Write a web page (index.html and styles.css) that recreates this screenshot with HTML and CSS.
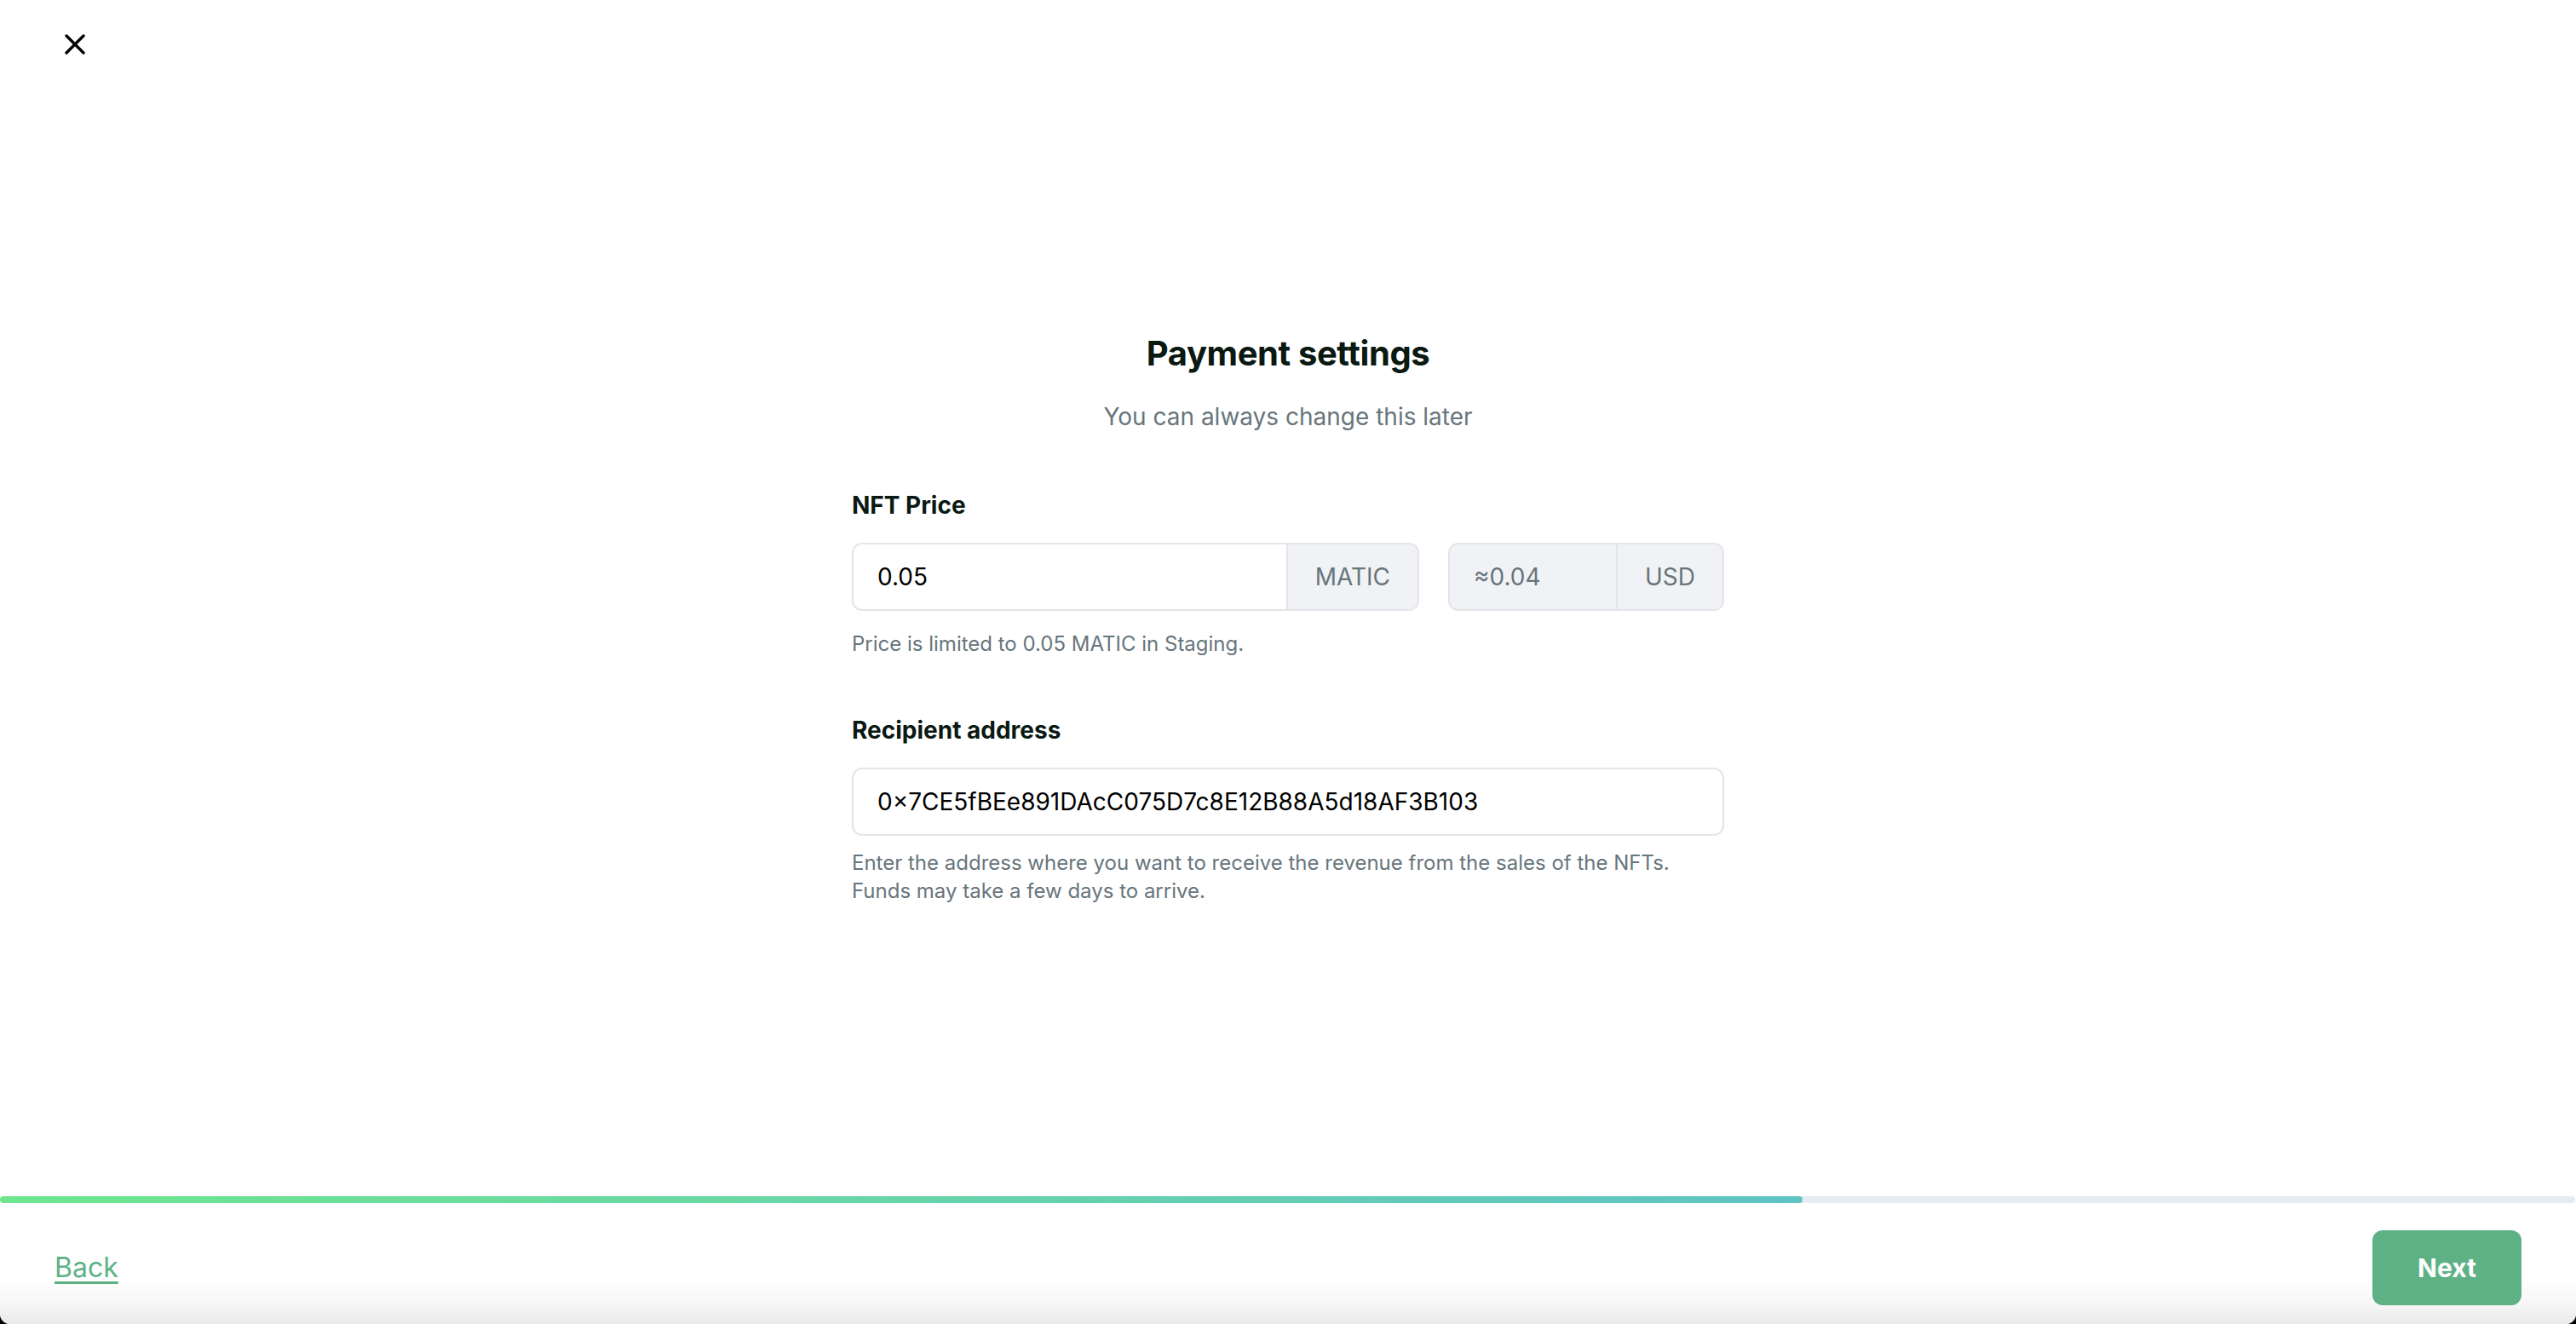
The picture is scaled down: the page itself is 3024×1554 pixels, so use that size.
FILE: index.html
```html
<!DOCTYPE html>
<html lang="en">
<head>
<meta charset="utf-8">
<title>Payment settings</title>
<link rel="stylesheet" href="styles.css">
</head>
<body>
<div class="app">
  <header class="topbar">
    <button class="close" aria-label="Close">
      <svg width="24" height="24" viewBox="0 0 24 24" fill="none" stroke="currentColor" stroke-width="3.4" stroke-linecap="round">
        <path d="M2 2 L22 22 M22 2 L2 22"/>
      </svg>
    </button>
  </header>

  <main class="content">
    <div class="form">
      <div class="intro">
        <h1 class="title">Payment settings</h1>
        <p class="subtitle">You can always change this later</p>
      </div>

      <div class="field">
        <label class="label">NFT Price</label>
        <div class="price-row">
          <div class="input-group price">
            <span class="value">0.05</span>
            <span class="addon">MATIC</span>
          </div>
          <div class="input-group converted">
            <span class="value muted">≈0.04</span>
            <span class="addon">USD</span>
          </div>
        </div>
        <p class="help help-price">Price is limited to 0.05 MATIC in Staging.</p>
      </div>

      <div class="field">
        <label class="label">Recipient address</label>
        <div class="input-group">
          <span class="value">0×7CE5fBEe891DAcC075D7c8E12B88A5d18AF3B103</span>
        </div>
        <p class="help">Enter the address where you want to receive the revenue from the sales of the NFTs.<br>Funds may take a few days to arrive.</p>
      </div>
    </div>
  </main>

  <footer class="footer">
    <div class="progress"><div class="progress-fill" style="width:70%"></div></div>
    <div class="actions">
      <a class="back" href="#">Back</a>
      <button class="next">Next</button>
    </div>
  </footer>
</div>
</body>
</html>
```

FILE: styles.css
```css
* { box-sizing: border-box; }

html, body {
  margin: 0;
  padding: 0;
  background: #000;
}

body {
  font-family: "Inter", "Noto Sans", sans-serif;
  color: #0b1a13;
}

.app {
  width: 3024px;
  height: 1554px;
  background: #fff;
  border-radius: 0 0 12px 12px;
  overflow: hidden;
  display: flex;
  flex-direction: column;
}

.topbar {
  padding: 40px 0 0 76px;
  height: 120px;
}

.close {
  border: 0;
  background: none;
  padding: 0;
  width: 24px;
  height: 24px;
  color: #000;
  display: block;
  cursor: pointer;
}

.close svg { display: block; }

.content {
  display: flex;
  justify-content: center;
  padding-top: 271px;
}

.form {
  width: 1024px;
  display: flex;
  flex-direction: column;
}

.intro {
  text-align: center;
  margin-bottom: 64px;
}

.title {
  margin: 0;
  font-size: 40px;
  line-height: 48px;
  font-weight: 700;
  letter-spacing: -0.4px;
  color: #0a1912;
}

.subtitle {
  margin: 30px 0 0;
  font-size: 28px;
  line-height: 40px;
  color: #67757c;
}

.field {
  display: flex;
  flex-direction: column;
}

.field + .field { margin-top: 65px; }

.label {
  font-size: 28px;
  line-height: 40px;
  font-weight: 700;
  color: #0a1912;
  margin-bottom: 24px;
}

.price-row {
  display: flex;
  gap: 34px;
}

.input-group {
  height: 80px;
  border: 2px solid #e3e5ea;
  border-radius: 12px;
  display: flex;
  align-items: stretch;
  overflow: hidden;
  background: #fff;
}

.input-group.price { width: 666px; }
.input-group.converted { flex: 1; background: #f1f2f5; }

.value {
  flex: 1;
  display: flex;
  align-items: center;
  padding: 0 28px;
  font-size: 28px;
  color: #000;
}

.value.muted { color: #67757c; }

.addon {
  display: flex;
  align-items: center;
  padding: 0 32px;
  border-left: 2px solid #e3e5ea;
  background: #f1f2f5;
  font-size: 28px;
  color: #67757c;
}

.help {
  margin: 15px 0 0;
  font-size: 24px;
  line-height: 33px;
  color: #67757c;
}

.help-price { margin-top: 22px; }

.footer {
  margin-top: auto;
  background: linear-gradient(to bottom, #fff 0%, #fff 62%, #f6f6f6 85%, #e9e9e9 100%);
}

.progress {
  height: 8px;
  background: #e6ecef;
  border-radius: 4px;
  margin-right: 1px;
}

.progress-fill {
  height: 100%;
  border-radius: 4px;
  background: linear-gradient(to right, #6ee68e, #5ec4c4);
}

.actions {
  display: flex;
  justify-content: space-between;
  align-items: center;
  padding: 32px 64px 22px;
}

.back {
  font-size: 32px;
  line-height: 40px;
  color: #5eb185;
  text-decoration: underline;
  text-decoration-thickness: 3px;
  text-underline-offset: 5px;
}

.next {
  width: 175px;
  height: 88px;
  border: 0;
  border-radius: 12px;
  background: #5eb185;
  color: #fff;
  font-family: "Inter", "Noto Sans", sans-serif;
  font-size: 30px;
  font-weight: 700;
  cursor: pointer;
}
```
